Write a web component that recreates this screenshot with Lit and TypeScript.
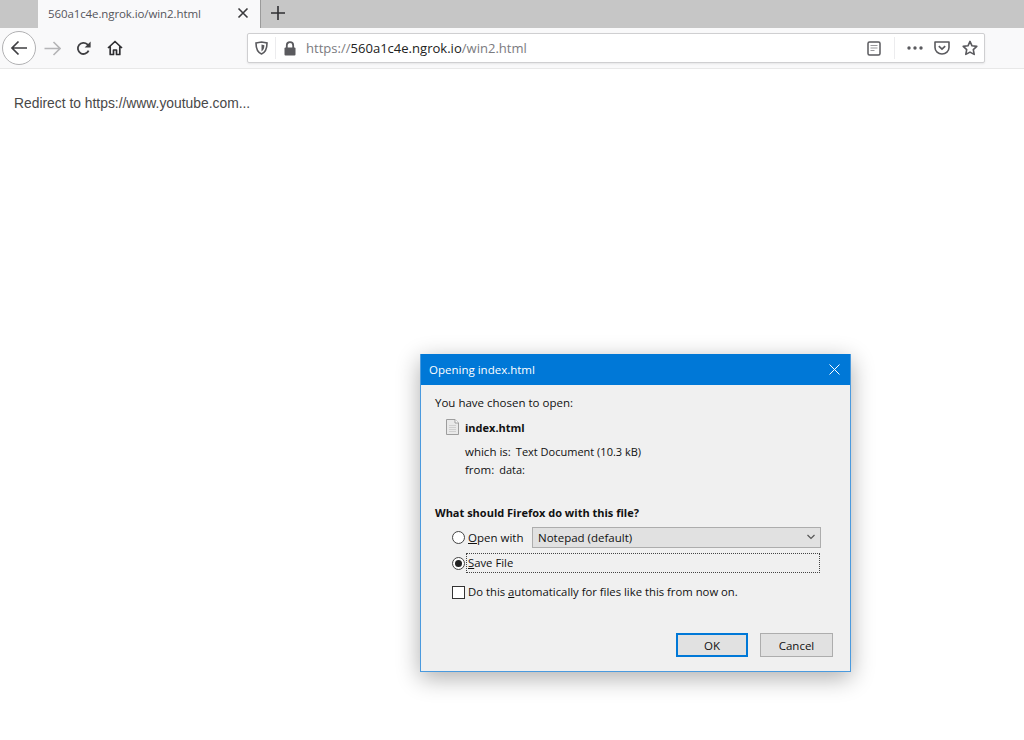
import { LitElement, html, css } from "lit";
import { customElement } from "lit/decorators.js";

@customElement("app-root")
export class AppRoot extends LitElement {
  static styles = css`
    :host { display: block; width: 1024px; height: 740px; position: relative; overflow: hidden; background: #fff; font-family: "Open Sans", "Liberation Sans", sans-serif; }
    svg { display: block; flex: none; }
    .tabs { height: 28px; background: #c6c6c6; display: flex; align-items: stretch; box-sizing: border-box; padding-left: 38px; }
    .tab { width: 223px; background: #f9f9fa; box-sizing: border-box; display: flex; align-items: center; padding: 0 11px 2px 10px; font-size: 11.5px; color: #55555a; justify-content: space-between; border-right: 1px solid #9a9a9a; }
    .tab-title { letter-spacing: -0.1px; }
    .newtab { width: 34px; display: flex; align-items: center; justify-content: center; padding-bottom: 3px; }
    .nav { height: 41px; background: #f9f9fa; border-bottom: 1px solid #e8e8e8; box-sizing: border-box; display: flex; align-items: center; padding-left: 2px; }
    .back { width: 34px; height: 34px; border-radius: 50%; border: 1px solid #b1b1b3; background: #fff; box-sizing: border-box; display: flex; align-items: center; justify-content: center; }
    .navbtn { display: flex; align-items: center; justify-content: center; }
    .fwd { margin-left: 8px; }
    .reload { margin-left: 15px; }
    .home { margin-left: 16px; }
    .url { margin-left: 124px; width: 738px; height: 30px; box-sizing: border-box; background: #fff; border: 1px solid #cfcfd1; border-radius: 2px; display: flex; align-items: center; box-shadow: 0 1px 2px rgba(0,0,0,.08); }
    .shield { margin-left: 7px; }
    .sep { width: 1px; height: 22px; background: #ececee; }
    .sep1 { margin-left: 7px; }
    .lock { margin-left: 7px; }
    .addr { margin-left: 9px; font-size: 13.05px; color: #7b7b80; flex: 1; white-space: nowrap; }
    .addr b { font-weight: 400; color: #222; }
    .reader { margin-right: 13px; }
    .sep2 { margin-right: 12px; }
    .dots { margin-right: 11px; }
    .pocket { margin-right: 12px; }
    .star { margin-right: 6px; }
    .page { padding: 25px 14px; font-family: "Liberation Sans", Arial, sans-serif; font-size: 13.85px; line-height: 18px; color: #484848; }

    .dialog { position: absolute; left: 420px; top: 354px; width: 431px; height: 318px; box-sizing: border-box; background: #f0f0f0; border: 1px solid #4a9ade; border-top: 0; box-shadow: 0 6px 22px rgba(0,0,0,.32); font-size: 11.5px; color: #111; display: flex; flex-direction: column; }
    .titlebar { height: 31px; flex: none; background: #0078d7; color: #fff; display: flex; align-items: center; justify-content: space-between; padding: 0 10px 0 8px; box-sizing: border-box; }
    .body { flex: 1; padding: 9px 17px 14px 14px; display: flex; flex-direction: column; }
    .line { line-height: 18px; white-space: nowrap; }
    .file { display: flex; align-items: center; gap: 6px; margin: 6px 0 0 11px; height: 18px; font-weight: 700; font-size: 11px; }
    .meta { display: flex; flex-direction: column; margin: 7px 0 0 30px; }
    .meta-row { display: flex; gap: 5px; line-height: 18px; }
    .meta-val { font-size: 11px; }
    .q { font-weight: 700; font-size: 11px; margin-top: 25px; }
    .opts { margin: 3px 0 0 17px; display: flex; flex-direction: column; }
    .opt { display: flex; align-items: center; height: 24px; }
    .radio { width: 13px; height: 13px; border-radius: 50%; border: 1px solid #444; background: #fff; box-sizing: border-box; flex: none; display: flex; align-items: center; justify-content: center; }
    .radio i { width: 7px; height: 7px; border-radius: 50%; background: #222; }
    .opt .lbl { margin-left: 3px; width: 64px; white-space: nowrap; }
    .select { width: 289px; height: 21px; box-sizing: border-box; background: #e1e1e1; border: 1px solid #adadad; display: flex; align-items: center; justify-content: space-between; padding: 0 4px 0 5px; }
    .save { margin-top: 2px; }
    .focus { margin-left: 1px; width: 354px; height: 20px; box-sizing: border-box; border: 1px dotted #444; display: flex; align-items: center; padding: 0 0 1px 1px; font-size: 11.3px; }
    .check-row { display: flex; align-items: center; margin: 7px 0 0 17px; height: 20px; font-size: 11.3px; }
    .check { width: 13px; height: 13px; border: 1px solid #333; background: #fff; box-sizing: border-box; flex: none; margin-right: 3px; }
    .buttons { margin-top: auto; display: flex; justify-content: flex-end; gap: 12px; }
    .btn { width: 73px; height: 24px; box-sizing: border-box; background: #e1e1e1; border: 1px solid #adadad; display: flex; align-items: center; justify-content: center; }
    .btn.def { border: 2px solid #0078d7; width: 72px; }
  `;

  render() {
    return html`
      <div class="tabs">
        <div class="tab">
          <span class="tab-title">560a1c4e.ngrok.io/win2.html</span>
          <svg width="12" height="12" viewBox="0 0 12 12"><path d="M1.5 1.5l9 9M10.5 1.5l-9 9" stroke="#3a3a3d" stroke-width="1.6"/></svg>
        </div>
        <div class="newtab">
          <svg width="14" height="14" viewBox="0 0 14 14"><path d="M7 0v14M0 7h14" stroke="#2f2f32" stroke-width="1.6"/></svg>
        </div>
      </div>
      <div class="nav">
        <div class="back">
          <svg width="18" height="16" viewBox="0 0 18 16"><path d="M17 8H2M8.5 1.5L2 8l6.5 6.5" fill="none" stroke="#3f3f42" stroke-width="1.7"/></svg>
        </div>
        <div class="navbtn fwd">
          <svg width="17" height="15" viewBox="0 0 17 15"><path d="M0.5 7.5h15M9.5 1l6.5 6.5L9.5 14" fill="none" stroke="#b5b5b7" stroke-width="1.6"/></svg>
        </div>
        <div class="navbtn reload">
          <svg width="15" height="15" viewBox="0 0 15 15"><path d="M12.6 9.6A5.6 5.6 0 1 1 11.4 3.4L13 5" fill="none" stroke="#3f3f42" stroke-width="1.8"/><path d="M14.6 0.6v6h-6z" fill="#3f3f42"/></svg>
        </div>
        <div class="navbtn home">
          <svg width="16" height="16" viewBox="0 0 16 16"><path d="M1 8L8 1.5 15 8M3.2 6.5V14.5H6.5V10H9.5V14.5H12.8V6.5" fill="none" stroke="#2f2f32" stroke-width="1.7" stroke-linejoin="round"/></svg>
        </div>
        <div class="url">
          <svg class="shield" width="13" height="14" viewBox="0 0 13 14"><path d="M1 2l5.5-1L12 2c0 5 -.8 9-5.5 11C1.8 11 1 7 1 2z" fill="none" stroke="#5a5a5e" stroke-width="1.6"/><path d="M6.5 3.6L9.4 4.2C9.3 7 8.6 9 6.500 10.400z" fill="#5a5a5e"/></svg>
          <div class="sep sep1"></div>
          <svg class="lock" width="14" height="15" viewBox="0 0 14 15"><path d="M3.8 7V4.4a3.2 3.2 0 0 1 6.4 0V7" fill="none" stroke="#5a5a5e" stroke-width="1.8"/><rect x="1.5" y="6.5" width="11" height="8" rx="1" fill="#5a5a5e"/></svg>
          <div class="addr">https://<b>560a1c4e.ngrok.io</b>/win2.html</div>
          <svg class="reader" width="14" height="15" viewBox="0 0 14 15"><rect x="1" y="1" width="12" height="13" rx="1.5" fill="none" stroke="#5a5a5e" stroke-width="1.5"/><path d="M3.5 4.5h7M3.5 7h7M3.5 9.5h4" stroke="#9a9a9d" stroke-width="1.2"/></svg>
          <div class="sep sep2"></div>
          <svg class="dots" width="16" height="4" viewBox="0 0 16 4"><circle cx="2" cy="2" r="1.7" fill="#5a5a5e"/><circle cx="8" cy="2" r="1.7" fill="#5a5a5e"/><circle cx="14" cy="2" r="1.7" fill="#5a5a5e"/></svg>
          <svg class="pocket" width="16" height="14" viewBox="0 0 16 14"><path d="M1 1h14v5.5a7 6.5 0 0 1-14 0z" fill="none" stroke="#5a5a5e" stroke-width="1.6" stroke-linejoin="round"/><path d="M4.8 5.2L8 8.2l3.2-3" fill="none" stroke="#5a5a5e" stroke-width="1.7"/></svg>
          <svg class="star" width="16" height="16" viewBox="0 0 16 16"><path d="M8 1.4l2 4.4 4.8.6-3.5 3.2.9 4.8L8 12.1l-4.2 2.3.9-4.8L1.2 6.4 6 5.8z" fill="none" stroke="#5a5a5e" stroke-width="1.6" stroke-linejoin="round"/></svg>
        </div>
      </div>
      <div class="page">Redirect to https://www.youtube.com...</div>

      <div class="dialog">
        <div class="titlebar">
          <span>Opening index.html</span>
          <svg width="11" height="11" viewBox="0 0 11 11"><path d="M.5.5l10 10M10.5.5l-10 10" stroke="#fff" stroke-width="1"/></svg>
        </div>
        <div class="body">
          <div class="line">You have chosen to open:</div>
          <div class="file">
            <svg width="13" height="16" viewBox="0 0 13 16"><path d="M.5.5h8.5L12.5 4v11.500H.5z" fill="#e9e9e9" stroke="#9d9d9d"/><path d="M9 .5V4h3.500" fill="#fff" stroke="#9d9d9d"/><path d="M3 6.500h7M3 8.500h7M3 10.500h7M3 12.500h7" stroke="#cfcfcf"/></svg>
            <span>index.html</span>
          </div>
          <div class="meta">
            <div class="meta-row"><span>which is:</span><span class="meta-val">Text Document (10.3 kB)</span></div>
            <div class="meta-row"><span>from:</span><span class="meta-val">data:</span></div>
          </div>
          <div class="line q">What should Firefox do with this file?</div>
          <div class="opts">
            <div class="opt">
              <span class="radio"></span>
              <span class="lbl"><u>O</u>pen with</span>
              <div class="select">
                <span>Notepad (default)</span>
                <svg width="10" height="6" viewBox="0 0 10 6"><path d="M1.500 1L5 4.500 8.500 1" fill="none" stroke="#555" stroke-width="1.200"/></svg>
              </div>
            </div>
            <div class="opt save">
              <span class="radio"><i></i></span>
              <div class="focus"><span><u>S</u>ave File</span></div>
            </div>
          </div>
          <div class="check-row">
            <span class="check"></span>
            <span class="line">Do this <u>a</u>utomatically for files like this from now on.</span>
          </div>
          <div class="buttons">
            <div class="btn def">OK</div>
            <div class="btn">Cancel</div>
          </div>
        </div>
      </div>
    `;
  }
}
